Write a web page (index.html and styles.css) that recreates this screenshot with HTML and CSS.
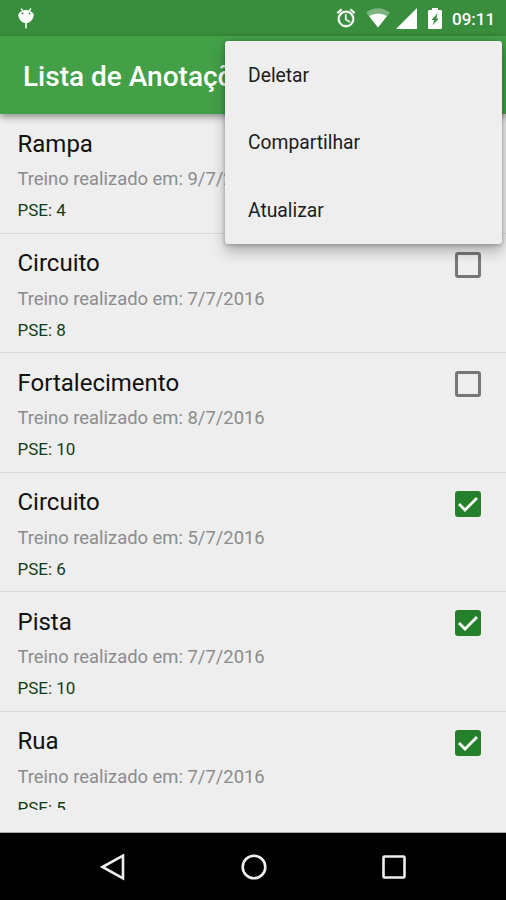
FILE: index.html
```html
<!DOCTYPE html>
<html lang="pt">
<head>
<meta charset="utf-8">
<title>Lista de Anotações</title>
<link rel="stylesheet" href="styles.css">
</head>
<body>
<div class="screen">
  <header class="status">
    <svg class="bug" width="18" height="24" viewBox="0 0 18 24"><path d="M4 2.500L6 5M14 2.500L12 5" stroke="#fff" stroke-width="1.300"/><path d="M1.500 8Q4 4 9 4T16.500 8Q17.500 9 16 12Q14 17 9 17T2 12Q.5 9 1.500 8Z" fill="#fff"/><path d="M9 16v6.500" stroke="#fff" stroke-width="1.500"/><circle cx="5.500" cy="7.500" r="1" fill="#388e3c"/><circle cx="12.500" cy="7.500" r="1" fill="#388e3c"/></svg>
    <div class="indicators">
      <svg class="alarm" width="22" height="22" viewBox="0 0 24 24"><path fill="#fff" d="M22 5.720l-4.600-3.860-1.290 1.530 4.600 3.860L22 5.720zM7.880 3.390L6.600 1.860 2 5.710l1.290 1.530 4.590-3.850zM12.500 8H11v6l4.750 2.850.75-1.230-4-2.370V8zM12 4a9 9 0 1 0 0 18 9 9 0 0 0 0-18zm0 16a7 7 0 1 1 0-14 7 7 0 0 1 0 14z" stroke="#fff" stroke-width=".4"/></svg>
      <svg class="wifi" width="24" height="20" viewBox="0 0 24 20"><path d="M0 4.500Q12-4 24 4.500L12 19.500Z" fill="#fff" opacity=".35"/><path d="M3 8Q12 3 21 8L12 19.500Z" fill="#fff"/></svg>
      <svg class="signal" width="21" height="21" viewBox="0 0 21 21"><path d="M21 0V21H0Z" fill="#fff"/></svg>
      <svg class="battery" width="14" height="21" viewBox="0 0 14 21"><path d="M4 0h6v2h2.700q1.300 0 1.300 1.300v16.400q0 1.300-1.300 1.300H1.300Q0 21 0 19.700V3.300Q0 2 1.300 2H4Z" fill="#fff"/><path d="M9.800 5L3.500 12H6.300L4.500 17.500L10.700 10.500H8.300Z" fill="#388e3c"/></svg>
      <span class="clock">09:11</span>
    </div>
  </header>
  <div class="toolbar"><h1>Lista de Anotações</h1></div>
  <main class="content">
    <div class="list">
      <article class="row"><div><h2>Rampa</h2><p class="date">Treino realizado em: 9/7/2016</p><p class="pse">PSE: 4</p></div><span class="box"></span></article>
      <article class="row"><div><h2>Circuito</h2><p class="date">Treino realizado em: 7/7/2016</p><p class="pse">PSE: 8</p></div><span class="box"></span></article>
      <article class="row"><div><h2>Fortalecimento</h2><p class="date">Treino realizado em: 8/7/2016</p><p class="pse">PSE: 10</p></div><span class="box"></span></article>
      <article class="row"><div><h2>Circuito</h2><p class="date">Treino realizado em: 5/7/2016</p><p class="pse">PSE: 6</p></div><span class="box checked"><svg width="26" height="26" viewBox="0 0 26 26"><path d="M4 13L10 19L22 7"/></svg></span></article>
      <article class="row"><div><h2>Pista</h2><p class="date">Treino realizado em: 7/7/2016</p><p class="pse">PSE: 10</p></div><span class="box checked"><svg width="26" height="26" viewBox="0 0 26 26"><path d="M4 13L10 19L22 7"/></svg></span></article>
      <article class="row"><div><h2>Rua</h2><p class="date">Treino realizado em: 7/7/2016</p><p class="pse">PSE: 5</p></div><span class="box checked"><svg width="26" height="26" viewBox="0 0 26 26"><path d="M4 13L10 19L22 7"/></svg></span></article>
    </div>
  </main>
  <nav class="navbar">
    <svg width="28" height="28" viewBox="0 0 28 28"><path d="M3.500 14L24 2.700V25.300Z"/></svg>
    <svg width="28" height="28" viewBox="0 0 28 28"><circle cx="14" cy="14" r="11.300"/></svg>
    <svg width="28" height="28" viewBox="0 0 28 28"><rect x="3.500" y="3.500" width="21" height="21" rx="1"/></svg>
  </nav>
  <div class="menu"><div>Deletar</div><div>Compartilhar</div><div>Atualizar</div></div>
</div>
</body>
</html>
```
FILE: styles.css
```css
* { box-sizing: border-box; margin: 0; padding: 0; }
body { font-family: Roboto, "Liberation Sans", sans-serif; background: #eee; overflow: hidden; }
svg { display: block; flex: none; }
.screen { position: relative; width: 506px; height: 900px; overflow: hidden; display: flex; flex-direction: column; background: #eee; }
.status { height: 36px; flex: none; background: #388e3c; display: flex; justify-content: space-between; padding: 0 11px 0 17px; }
.bug { margin-top: 6px; }
.indicators { display: flex; align-items: flex-start; color: #fff; }
.alarm { margin: 7px 9px 0 0; }
.wifi { margin: 8px 6px 0 0; }
.signal { margin: 8px 11px 0 0; }
.battery { margin: 8px 10px 0 0; }
.clock { font-size: 17px; font-weight: 500; line-height: 20px; margin-top: 9px; width: 43px; white-space: nowrap; }
.toolbar { height: 78px; flex: none; background: #43a047; padding: 3px 0 0 23px; display: flex; align-items: center; position: relative; z-index: 1; box-shadow: 0 3px 7px rgba(0, 0, 0, .4); }
h1 { font-size: 28px; font-weight: 500; line-height: 36px; color: #fff; white-space: nowrap; }
.content { height: 719px; flex: none; border-bottom: 1px solid #aaa; }
.list { height: 696px; overflow: hidden; }
.row { height: 119.500px; display: flex; justify-content: space-between; padding: 14.500px 25.500px 0 17.500px; border-bottom: 1px solid #dadada; }
h2 { font-size: 24px; font-weight: 400; line-height: 30px; color: #111; }
.date { font-size: 18.400px; line-height: 24px; margin-top: 8.500px; color: #8c8c8c; }
.pse { font-size: 17px; line-height: 22px; margin-top: 8px; color: #123c16; }
.box { width: 26px; height: 26px; margin-top: 3.500px; border: 3px solid #777; border-radius: 3px; }
.checked { border: 0; background: #25802b; }
.checked path { fill: none; stroke: #fff; stroke-width: 2.800; }
.navbar { height: 67px; background: #000; display: flex; justify-content: space-between; align-items: center; padding: 0 98px 0 99px; }
.navbar svg * { fill: none; stroke: #eee; stroke-width: 2.600; }
.menu { position: absolute; z-index: 2; left: 225px; top: 41px; width: 276.500px; height: 202.500px; background: #eee; border-radius: 3px; box-shadow: 0 7px 14px rgba(0, 0, 0, .27), 0 1px 4px rgba(0, 0, 0, .25); font-size: 19.300px; color: #1c1c1c; }
.menu div { height: 67.400px; line-height: 69.500px; padding-left: 23px; }
```
